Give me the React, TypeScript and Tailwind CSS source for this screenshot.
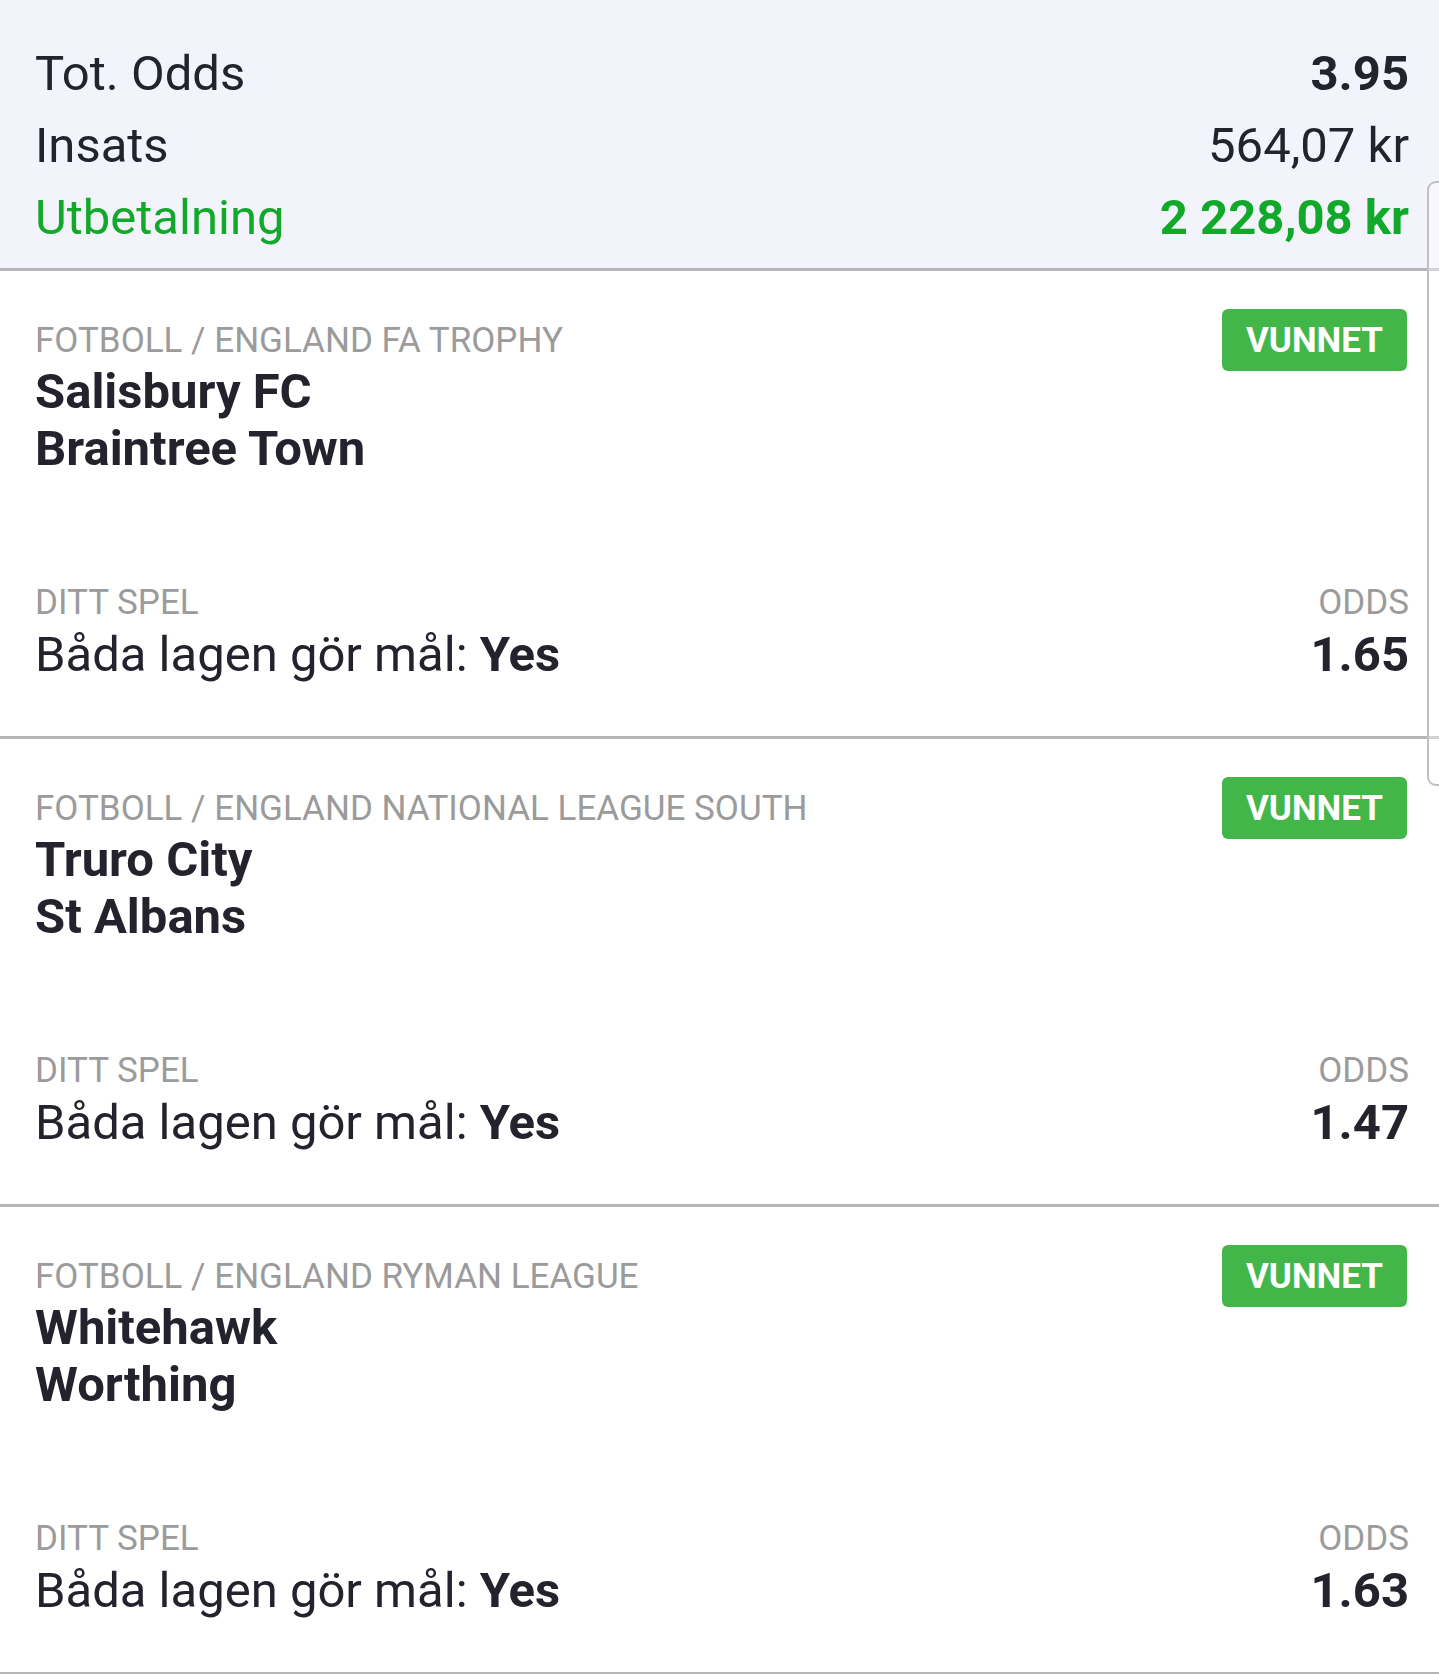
import React from "react";

type Leg = {
  category: string;
  home: string;
  away: string;
  odds: string;
};

const legs: Leg[] = [
  { category: "FOTBOLL / ENGLAND FA TROPHY", home: "Salisbury FC", away: "Braintree Town", odds: "1.65" },
  { category: "FOTBOLL / ENGLAND NATIONAL LEAGUE SOUTH", home: "Truro City", away: "St Albans", odds: "1.47" },
  { category: "FOTBOLL / ENGLAND RYMAN LEAGUE", home: "Whitehawk", away: "Worthing", odds: "1.63" },
];

function LegCard({ leg }: { leg: Leg }) {
  return (
    <div className="border-b-[3px] border-[#b5b5ba] bg-white pt-[38px] pb-[53px] pl-[35px] pr-[30px]">
      <div className="flex items-start justify-between">
        <div className="pt-[10px]">
          <div className="text-[35px] leading-[44px] text-[#9b9b9b]">{leg.category}</div>
          <div className="text-[49px] leading-[57px] font-bold text-[#23232d]">{leg.home}</div>
          <div className="text-[49px] leading-[57px] font-bold text-[#23232d]">{leg.away}</div>
        </div>
        <div className="mr-[2px] flex h-[62px] w-[185px] items-center justify-center rounded-[6px] bg-[#43b649] text-[35px] font-bold leading-none text-white">
          VUNNET
        </div>
      </div>
      <div className="mt-[102px] flex items-end justify-between">
        <div>
          <div className="text-[35px] leading-[47px] text-[#9b9b9b]">DITT SPEL</div>
          <div className="text-[49px] leading-[57px] text-[#23232d]">
            Båda lagen gör mål: <span className="font-bold">Yes</span>
          </div>
        </div>
        <div className="text-right">
          <div className="text-[35px] leading-[47px] text-[#9b9b9b]">ODDS</div>
          <div className="text-[49px] leading-[57px] font-bold text-[#23232d]">{leg.odds}</div>
        </div>
      </div>
    </div>
  );
}

export default function App() {
  return (
    <div
      className="relative min-h-[1674px] w-full overflow-hidden bg-white"
      style={{ fontFamily: "Roboto, 'Noto Sans', sans-serif" }}
    >
      <div className="border-b-[3px] border-[#b5b5ba] bg-[#f3f4fb] pt-[38px] pb-[14px] pl-[35px] pr-[30px]">
        <div className="flex h-[72px] items-center justify-between text-[49px] leading-[72px] text-[#23232d]">
          <span>Tot. Odds</span>
          <span className="font-bold">3.95</span>
        </div>
        <div className="flex h-[72px] items-center justify-between text-[49px] leading-[72px] text-[#23232d]">
          <span>Insats</span>
          <span>564,07 kr</span>
        </div>
        <div className="flex h-[72px] items-center justify-between text-[49px] leading-[72px] text-[#12a82a]">
          <span>Utbetalning</span>
          <span className="font-bold">2 228,08 kr</span>
        </div>
      </div>
      {legs.map((leg) => (
        <LegCard key={leg.home} leg={leg} />
      ))}
      <div className="pointer-events-none absolute right-[-12px] top-[181px] h-[605px] w-[24px] rounded-[9px] border-[2px] border-[#c0c0c4] bg-white/40" />
    </div>
  );
}
